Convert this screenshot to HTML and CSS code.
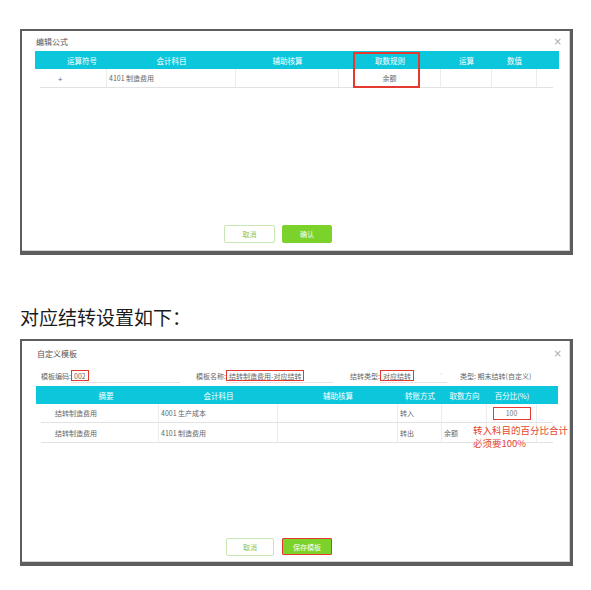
FILE: index.html
```html
<!DOCTYPE html>
<html lang="zh">

<head>
    <meta charset="UTF-8">
    <meta name="viewport" content="width=device-width, initial-scale=1.0">
    <link rel="stylesheet" href="styles.css">
    <title>编辑公式 / 自定义模板</title>
</head>

<body>
    <div class="page">
        <!-- Captura 1: editar fórmula -->
        <div class="shot shot-formula">
            <div class="dlg-head">
                <span class="dlg-title">编辑公式</span>
                <span class="dlg-close">×</span>
            </div>

            <div class="grid-wrap">
                <div class="thead cols-formula-head">
                    <div class="th th-first">运算符号</div>
                    <div class="th">会计科目</div>
                    <div class="th">辅助核算</div>
                    <div class="th">取数规则</div>
                    <div class="th">运算</div>
                    <div class="th">数值</div>
                    <div class="th"></div>
                </div>
                <div class="trow cols-formula-body">
                    <div class="td td-op">+</div>
                    <div class="td td-left">4101 制造费用</div>
                    <div class="td"></div>
                    <div class="td td-center">余额</div>
                    <div class="td"></div>
                    <div class="td"></div>
                    <div class="td td-end"></div>
                </div>
                <div class="mark mark-rule"></div>
            </div>

            <div class="dlg-foot foot-formula">
                <button class="btn btn-cancel">取消</button>
                <button class="btn btn-ok">确认</button>
            </div>
        </div>

        <p class="caption">对应结转设置如下：</p>

        <!-- Captura 2: plantilla -->
        <div class="shot shot-template">
            <div class="dlg-head head-template">
                <span class="dlg-title">自定义模板</span>
                <span class="dlg-close">×</span>
            </div>

            <div class="form-row">
                <div class="field field-code">
                    <span class="field-label">模板编码:</span>
                    <span class="field-input input-code"><span class="boxed">002</span></span>
                </div>
                <div class="field field-name">
                    <span class="field-label">模板名称:</span>
                    <span class="field-input input-name"><span class="boxed">结转制造费用-对应结转</span></span>
                </div>
                <div class="field field-type">
                    <span class="field-label">结转类型:</span>
                    <span class="field-input input-type"><span class="boxed">对应结转</span><span class="caret">˅</span></span>
                </div>
                <div class="field-note">类型: 期末结转(自定义)</div>
            </div>

            <div class="grid-wrap grid-template">
                <div class="thead cols-template-head">
                    <div class="th th-summary">摘要</div>
                    <div class="th">会计科目</div>
                    <div class="th">辅助核算</div>
                    <div class="th">转账方式</div>
                    <div class="th">取数方向</div>
                    <div class="th">百分比(%)</div>
                    <div class="th"></div>
                </div>
                <div class="trow cols-template-body">
                    <div class="td td-summary">结转制造费用</div>
                    <div class="td td-left">4001 生产成本</div>
                    <div class="td"></div>
                    <div class="td td-left">转入</div>
                    <div class="td"></div>
                    <div class="td td-center"><span class="pct-input">100</span></div>
                    <div class="td td-end"></div>
                </div>
                <div class="trow trow-tall cols-template-body">
                    <div class="td td-summary">结转制造费用</div>
                    <div class="td td-left">4101 制造费用</div>
                    <div class="td"></div>
                    <div class="td td-left">转出</div>
                    <div class="td td-left">余额</div>
                    <div class="td"></div>
                    <div class="td td-end"></div>
                </div>
                <div class="note-red">转入科目的百分比合计<br>必须要100%</div>
            </div>

            <div class="dlg-foot foot-template">
                <button class="btn btn-cancel btn-narrow">取消</button>
                <button class="btn btn-ok btn-marked">保存模板</button>
            </div>
        </div>
    </div>
</body>

</html>
```

FILE: styles.css
```css
/* General */
body {
    margin: 0;
    background: #ffffff;
    font-family: "Noto Sans CJK SC", "Noto Sans", sans-serif;
    color: #333;
}

.page {
    padding: 29px 0 0 20px;
}

/* Marco de la captura */
.shot {
    box-sizing: border-box;
    width: 553px;
    border: 2px solid #5d5d5d;
    border-right-width: 3px;
    border-bottom-width: 4px;
    background: #ffffff;
    box-shadow: inset 0 -1px 0 #d4d4d4, inset -1px 0 0 #d4d4d4;
}

.shot-formula {
    height: 226px;
}

.shot-template {
    height: 227px;
}

/* Cabecera del diálogo */
.dlg-head {
    height: 20px;
    display: flex;
    align-items: center;
    justify-content: space-between;
    padding: 0 8px 0 14px;
}

.head-template {
    height: 24px;
    padding-left: 15px;
}

.dlg-title {
    font-size: 8px;
    color: #555;
}

.dlg-close {
    font-size: 10px;
    color: #a8a8a8;
    font-family: "DejaVu Sans", sans-serif;
}

/* Tabla */
.grid-wrap {
    position: relative;
    margin-left: 13px;
}

.thead {
    display: grid;
    height: 18px;
    background-color: #0cc7db;
}

.th {
    display: flex;
    align-items: center;
    justify-content: center;
    font-size: 7.5px;
    color: #ffffff;
}

.trow {
    display: grid;
    box-sizing: border-box;
    height: 19px;
    border-bottom: 1px solid #e2e2e2;
}

.trow-tall {
    height: 20px;
}

.td {
    display: flex;
    align-items: center;
    font-size: 7px;
    color: #666;
    border-right: 1px solid #ececec;
}

.td-end {
    border-right: none;
}

.td-left {
    padding-left: 2px;
}

.td-center {
    justify-content: center;
}

.td-op {
    padding-left: 18px;
    font-size: 8px;
}

.td-summary {
    padding-left: 14px;
}

.cols-formula-head {
    width: 524px;
    grid-template-columns: 72px 129px 103px 102px 51px 45px 22px;
}

.th-first {
    padding-left: 22px;
}

.cols-formula-body {
    width: 513px;
    margin-left: 5px;
    grid-template-columns: 67px 129px 103px 102px 51px 45px 16px;
}

.mark {
    position: absolute;
    box-sizing: border-box;
    border: 2px solid #e5392f;
}

.mark-rule {
    left: 318px;
    top: 1px;
    width: 67px;
    height: 36px;
}

/* Botones */
.dlg-foot {
    display: flex;
    gap: 7px;
}

.foot-formula {
    margin-top: 137px;
    padding-left: 202px;
}

.foot-template {
    margin-top: 95px;
    padding-left: 204px;
    gap: 8px;
}

.btn {
    box-sizing: border-box;
    width: 51px;
    height: 18px;
    padding: 0;
    border-radius: 2px;
    font-family: inherit;
    font-size: 7px;
    cursor: pointer;
}

.btn-cancel {
    background: #ffffff;
    border: 1px solid #c9e7b2;
    color: #86c45a;
}

.btn-narrow {
    width: 48px;
}

.btn-ok {
    width: 50px;
    background: #7bd22b;
    border: 1px solid #7bd22b;
    color: #ffffff;
}

.btn-marked {
    height: 17px;
    border: 1.5px solid #e33a2e;
    border-radius: 1px;
}

/* Texto intermedio */
.caption {
    margin: 50px 0 10px;
    font-size: 19px;
    line-height: 24px;
    color: #1c1c1c;
}

/* Formulario de la plantilla */
.form-row {
    display: flex;
    align-items: flex-end;
    height: 18px;
    margin: 0 0 3px 19px;
}

.field {
    display: flex;
    align-items: center;
}

.field-label {
    width: 30px;
    font-size: 7px;
    color: #666;
}

.field-input {
    box-sizing: border-box;
    display: flex;
    align-items: center;
    height: 14px;
    border-bottom: 1px solid #e4e4e4;
}

.input-code {
    width: 109px;
}

.input-name {
    width: 107px;
}

.input-type {
    width: 67px;
}

.field-name {
    margin-left: 16px;
}

.field-type {
    margin-left: 17px;
}

.boxed {
    box-sizing: border-box;
    height: 11px;
    display: flex;
    align-items: center;
    padding: 0 2px;
    border: 1.5px solid #e5392f;
    font-size: 7px;
    color: #666;
}

.caret {
    margin-left: 26px;
    font-size: 6px;
    color: #aaa;
}

.field-note {
    margin-left: 13px;
    height: 14px;
    display: flex;
    align-items: center;
    font-size: 7px;
    color: #666;
}

.grid-template {
    margin-left: 14px;
}

.cols-template-head {
    width: 522px;
    grid-template-columns: 123px 119px 120px 44px 45px 50px 21px;
}

.th-summary {
    padding-left: 17px;
}

.cols-template-body {
    width: 512px;
    margin-left: 5px;
    grid-template-columns: 118px 119px 120px 44px 45px 50px 16px;
}

.pct-input {
    box-sizing: border-box;
    width: 38px;
    height: 13px;
    display: flex;
    align-items: center;
    justify-content: center;
    border: 1.5px solid #e5392f;
    font-size: 7px;
    color: #777;
}

.note-red {
    position: absolute;
    left: 437px;
    top: 38px;
    font-size: 9.5px;
    line-height: 13px;
    color: #e8432e;
    white-space: nowrap;
}
```
